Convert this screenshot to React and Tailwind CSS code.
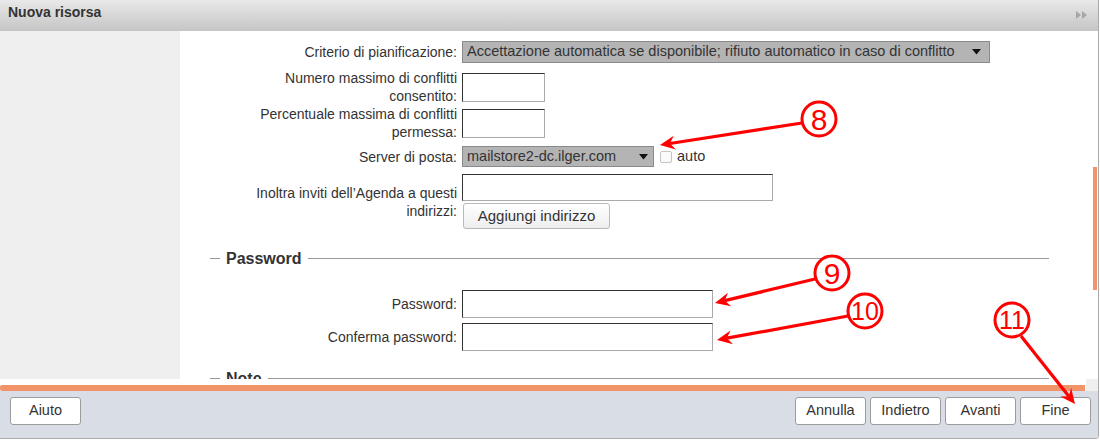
import React from "react";

// small helper: arrow head polygon pointing at (x2, y2)
function headPoints(x1, y1, x2, y2) {
   const dx = x2 - x1;
   const dy = y2 - y1;
   const len = Math.hypot(dx, dy);
   const ux = dx / len;
   const uy = dy / len;
   const nx = -uy;
   const ny = ux;
   const L = 15;
   const W = 7;
   const bx = x2 - ux * L;
   const by = y2 - uy * L;
   const mx = x2 - ux * (L - 5);
   const my = y2 - uy * (L - 5);
   return [
      [x2, y2],
      [bx + nx * W, by + ny * W],
      [mx, my],
      [bx - nx * W, by - ny * W],
   ]
      .map((p) => p.join(","))
      .join(" ");
}

function Callout({ cx, cy, label, from, to, size = 28 }) {
   const [x1, y1] = from;
   const [x2, y2] = to;
   const dx = x2 - x1;
   const dy = y2 - y1;
   const len = Math.hypot(dx, dy);
   const ex = x2 - (dx / len) * 10;
   const ey = y2 - (dy / len) * 10;
   return (
      <g>
         <line x1={x1} y1={y1} x2={ex} y2={ey} stroke="#ff0000" strokeWidth="3.2" />
         <polygon points={headPoints(x1, y1, x2, y2)} fill="#ff0000" />
         <circle cx={cx} cy={cy} r="17" fill="#ffffff" stroke="#ff0000" strokeWidth="3" />
         <text
            x={cx}
            y={cy + size * 0.36}
            textAnchor="middle"
            fill="#ff0000"
            fontSize={size}
            fontFamily="'Liberation Sans', Arial, sans-serif"
         >
            {label}
         </text>
      </g>
   );
}

function Field({ className = "" }) {
   return (
      <div
         className={
            "bg-white border border-t-[#333] border-l-[#333] border-r-[#aaa] border-b-[#aaa] " +
            className
         }
      />
   );
}

function Caret() {
   return (
      <svg width="9" height="6" viewBox="0 0 9 6" className="shrink-0">
         <polygon points="0,0 9,0 4.5,5.5" fill="#111" />
      </svg>
   );
}

function Legend({ children }) {
   return (
      <div className="flex items-center h-[20px]">
         <div className="w-[10px] h-px bg-[#999]" />
         <span className="px-[6px] text-[16px] font-bold leading-[20px] text-[#333]">{children}</span>
         <div className="flex-1 h-px bg-[#999]" />
      </div>
   );
}

function Label({ children, className = "" }) {
   return (
      <div className={"w-[248px] pr-[1px] text-right leading-[18px] text-[#333] " + className}>
         {children}
      </div>
   );
}

function FootButton({ children }) {
   return (
      <button className="w-[71px] h-[28px] rounded-[3px] border border-[#9c9c9c] bg-white text-[14.5px] text-[#333]">
         {children}
      </button>
   );
}

export default function App() {
   return (
      <div className="relative w-[1100px] h-[440px] bg-white font-['Liberation_Sans',Arial,sans-serif] text-[14px] text-[#333]">
         <div className="w-[1099px] h-[439px] flex flex-col border-r border-b border-[#aaa] rounded-br-[4px] overflow-hidden">
            {/* title bar */}
            <header className="h-[31px] shrink-0 flex items-start justify-between pl-[8px] pr-[11px] bg-gradient-to-b from-[#e9e9e9] to-[#c5c5c5]">
               <h1 className="mt-[3px] text-[14px] font-bold leading-[18px] text-[#333]">Nuova risorsa</h1>
               <svg width="11" height="8" viewBox="0 0 11 8" className="mt-[11px]">
                  <polygon points="0,0 5,4 0,8" fill="#a6a6a6" />
                  <polygon points="6,0 11,4 6,8" fill="#a6a6a6" />
               </svg>
            </header>

            {/* scrollable body */}
            <div className="h-[348px] shrink-0 flex">
               <div className="flex-1 flex overflow-hidden">
                  <aside className="w-[180px] shrink-0 bg-[#efefef]" />
                  <div className="flex-1 flex flex-col pl-[30px] pr-[37px] pt-[10px]">
                     <div className="flex items-center h-[22px]">
                        <Label>Criterio di pianificazione:</Label>
                        <div className="ml-[4px] w-[528px] h-[22px] flex items-center justify-between pl-[4px] pr-[8px] bg-[#b4b4b4] border border-[#8a8a8a] text-[14.5px]">
                           <span className="whitespace-nowrap">
                              Accettazione automatica se disponibile; rifiuto automatico in caso di conflitto
                           </span>
                           <Caret />
                        </div>
                     </div>

                     <div className="flex items-center mt-[6px] h-[36px]">
                        <Label>
                           Numero massimo di conflitti
                           <br />
                           consentito:
                        </Label>
                        <Field className="ml-[4px] w-[83px] h-[29px]" />
                     </div>

                     <div className="flex items-center h-[36px]">
                        <Label>
                           Percentuale massima di conflitti
                           <br />
                           permessa:
                        </Label>
                        <Field className="ml-[4px] w-[83px] h-[29px]" />
                     </div>

                     <div className="flex items-center mt-[5px] h-[22px]">
                        <Label>Server di posta:</Label>
                        <div className="ml-[4px] w-[192px] h-[21px] flex items-center justify-between pl-[4px] pr-[5px] bg-[#b4b4b4] border border-[#8a8a8a] text-[14.5px]">
                           <span className="whitespace-nowrap">mailstore2-dc.ilger.com</span>
                           <Caret />
                        </div>
                        <span className="ml-[6px] w-[12px] h-[12px] rounded-[2px] border border-[#c4c4c4] bg-[#fafafa]" />
                        <span className="ml-[5px] text-[14.5px]">auto</span>
                     </div>

                     <div className="flex items-center mt-[6px]">
                        <Label className="mt-[2px]">
                           Inoltra inviti dell’Agenda a questi
                           <br />
                           indirizzi:
                        </Label>
                        <div className="ml-[4px] flex flex-col items-start">
                           <Field className="w-[311px] h-[27px]" />
                           <button className="mt-[2px] ml-[1px] w-[147px] h-[26px] rounded-[3px] border border-[#b9b9b9] bg-gradient-to-b from-white to-[#eeeeee] text-[15px] text-[#333]">
                              Aggiungi indirizzo
                           </button>
                        </div>
                     </div>

                     <div className="mt-[20px]">
                        <Legend>Password</Legend>
                     </div>

                     <div className="flex items-center mt-[21px] h-[28px]">
                        <Label>Password:</Label>
                        <Field className="ml-[4px] w-[251px] h-[28px]" />
                     </div>

                     <div className="flex items-center mt-[5px] h-[28px]">
                        <Label>Conferma password:</Label>
                        <Field className="ml-[4px] w-[251px] h-[28px]" />
                     </div>

                     <div className="mt-[18px]">
                        <Legend>Note</Legend>
                     </div>
                  </div>
               </div>
               {/* vertical scrollbar */}
               <div className="w-[12px] shrink-0 pl-[7px] pt-[136px]">
                  <div className="w-[4px] h-[123px] bg-[#f29469]" />
               </div>
            </div>

            {/* horizontal scrollbar */}
            <div className="h-[12px] shrink-0 flex">
               <div className="flex-1 flex items-end">
                  <div className="w-[1085px] h-[6px] rounded-l-[2px] bg-[#f29469]" />
               </div>
               <div className="w-[12px] bg-[#efefef]" />
            </div>

            {/* footer */}
            <footer className="flex-1 flex items-start justify-between pl-[10px] pr-[7px] pt-[6px] bg-[#d9dee6]">
               <FootButton>Aiuto</FootButton>
               <div className="flex gap-[4px]">
                  <FootButton>Annulla</FootButton>
                  <FootButton>Indietro</FootButton>
                  <FootButton>Avanti</FootButton>
                  <FootButton>Fine</FootButton>
               </div>
            </footer>
         </div>

         {/* annotation callouts */}
         <svg className="absolute inset-0 pointer-events-none" width="1100" height="440" viewBox="0 0 1100 440">
            <Callout cx={819} cy={119} label="8" size={30} from={[802, 123]} to={[660, 145]} />
            <Callout cx={832} cy={273} label="9" size={30} from={[815, 279]} to={[715, 303]} />
            <Callout cx={865} cy={311} label="10" size={25} from={[848, 316]} to={[717, 340]} />
            <Callout cx={1012} cy={320} label="11" size={25} from={[1021, 336]} to={[1075, 404]} />
         </svg>
      </div>
   );
}
